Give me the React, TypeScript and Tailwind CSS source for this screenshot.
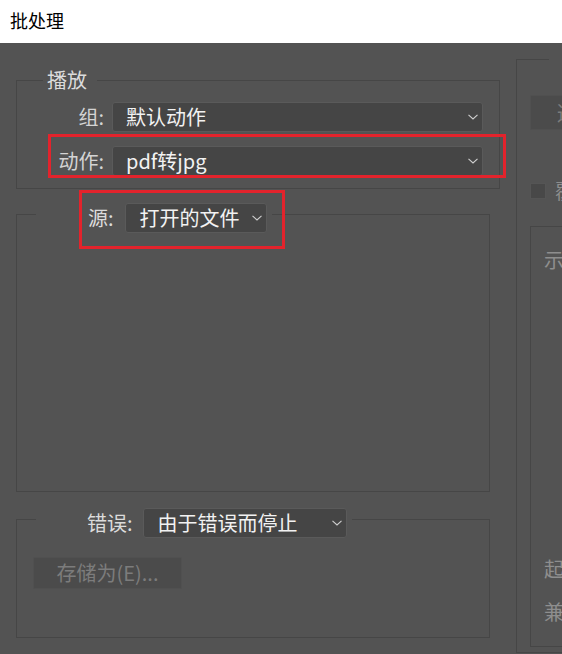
import { ReactNode } from "react";

const font = { fontFamily: '"Noto Sans CJK SC", "Noto Sans", sans-serif' };

function Chevron() {
  return (
    <svg width="10" height="6" viewBox="0 0 10 6" className="shrink-0" aria-hidden="true">
      <path d="M0.5 0.8 L5 5 L9.5 0.8" fill="none" stroke="#cfcfcf" strokeWidth="1.1" />
    </svg>
  );
}

function Select({ value, className }: { value: string; className: string }) {
  return (
    <div
      className={`flex h-[30px] items-center justify-between rounded-[3px] border border-[#5a5a5a] bg-[#454545] pr-[4px] text-[20px] leading-[26px] text-[#f2f2f2] ${className}`}
    >
      <span className="whitespace-nowrap">{value}</span>
      <Chevron />
    </div>
  );
}

function Row({ label, children }: { label: string; children: ReactNode }) {
  return (
    <div className="flex items-center">
      <span className="w-[87px] whitespace-nowrap text-right text-[20px] leading-[26px] text-[#d4d4d4]">{label}</span>
      <div className="ml-[8px]">{children}</div>
    </div>
  );
}

export default function App() {
  return (
    <div className="relative h-[654px] w-[562px] overflow-hidden bg-[#535353]" style={font}>
      <div className="flex h-[43px] items-center bg-white pl-[10px] pb-[2px] text-[18px] text-black">批处理</div>

      <div className="flex h-[611px]">
        {/* left column */}
        <div className="flex w-[500px] shrink-0 flex-col pl-[16px]">
          <fieldset className="mt-[25px] w-[484px] border border-[#464646] pb-[12px] pr-[16px]">
            <legend className="ml-[26px] pl-[4px] pr-[10px] text-[20px] leading-[24px] text-[#dcdcdc]">播放</legend>
            <div className="mt-[10px] flex flex-col gap-[14px]">
              <Row label="组:">
                <Select value="默认动作" className="w-[371px] pl-[13px]" />
              </Row>
              <Row label="动作:">
                <Select value="pdf转jpg" className="w-[371px] pl-[13px]" />
              </Row>
            </div>
          </fieldset>

          <fieldset className="mt-[6px] h-[297px] w-[474px] border border-[#464646]">
            <legend className="ml-[19px] pl-[52px] pr-[5px] pt-[8px]">
              <div className="flex items-center">
                <span className="whitespace-nowrap text-[20px] leading-[26px] text-[#dcdcdc]">源:</span>
                <Select value="打开的文件" className="ml-[11px] w-[142px] pl-[14px]" />
              </div>
            </legend>
          </fieldset>

          <fieldset className="mt-[8px] h-[138px] w-[474px] border border-[#464646]">
            <legend className="ml-[19px] pl-[51px] pr-[5px] pt-[8px]">
              <div className="flex items-center">
                <span className="whitespace-nowrap text-[20px] leading-[26px] text-[#dcdcdc]">错误:</span>
                <Select value="由于错误而停止" className="ml-[10px] w-[204px] pl-[14px]" />
              </div>
            </legend>
            <button
              type="button"
              className="ml-[16px] mt-[19px] flex h-[32px] w-[149px] items-center justify-center rounded-[2px] border border-[#505050] bg-[#4b4b4b] text-[20px] leading-[26px] text-[#7c7c7c]"
            >
              存储为(E)...
            </button>
          </fieldset>
        </div>

        {/* right column */}
        <fieldset className="ml-[16px] mt-[4px] h-[606px] w-[320px] shrink-0 border border-[#464646] pl-[13px]">
          <legend className="ml-[19px] pl-[40px] pr-[4px] text-[20px] leading-[24px] text-[#dcdcdc]">目标</legend>
          <button
            type="button"
            className="mt-[24px] flex h-[35px] w-[110px] items-center justify-center rounded-[2px] border border-[#505050] bg-[#4b4b4b] text-[20px] leading-[26px] text-[#7c7c7c]"
          >
            选择...
          </button>
          <div className="mt-[48px] flex items-center">
            <span className="h-[16px] w-[16px] shrink-0 border border-[#555555] bg-[#484848]" />
            <span className="ml-[9px] whitespace-nowrap text-[20px] leading-[26px] text-[#8e8e8e]">覆盖动作中的“存储为”命令</span>
          </div>
          <fieldset className="mt-[10px] flex h-[433px] w-[300px] flex-col border border-[#464646] pb-[22px] pl-[13px]">
            <legend className="ml-[19px] px-[4px] text-[20px] leading-[24px] text-[#8e8e8e]">文件命名</legend>
            <div className="mt-[10px] whitespace-nowrap text-[20px] leading-[24px] text-[#8e8e8e]">示例: 我的文件.gif</div>
            <div className="mt-auto whitespace-nowrap text-[20px] leading-[24px] text-[#8e8e8e]">起始序列号:</div>
            <div className="mt-[19px] whitespace-nowrap text-[20px] leading-[24px] text-[#8e8e8e]">兼容性:</div>
          </fieldset>
        </fieldset>
      </div>

      {/* red annotation boxes */}
      <div className="absolute left-[48px] top-[134px] h-[44px] w-[458px] border-[3px] border-[#e3232c]" />
      <div className="absolute left-[79px] top-[190px] h-[59px] w-[206px] border-[3px] border-[#e3232c]" />
    </div>
  );
}
